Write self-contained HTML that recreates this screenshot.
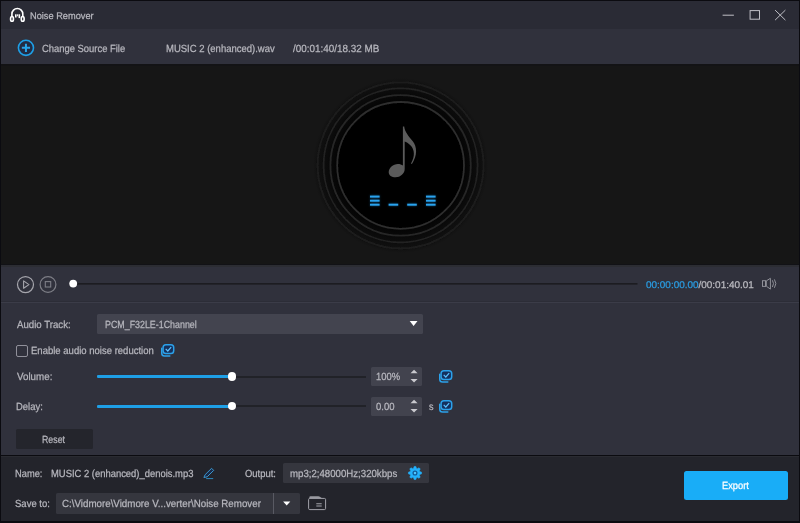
<!DOCTYPE html>
<html>
<head>
<meta charset="utf-8">
<title>Noise Remover</title>
<style>
*{margin:0;padding:0;box-sizing:border-box;}
html,body{width:800px;height:523px;overflow:hidden;background:#0b0b10;}
body{font-family:"Liberation Sans",sans-serif;color:#c9c9ce;position:relative;}
.abs{position:absolute;}
.t{position:absolute;text-rendering:geometricPrecision;white-space:nowrap;line-height:1;transform-origin:0 0;font-size:10.2px;color:#b7b7be;-webkit-text-stroke:0.25px currentColor;}
#titlebar{left:1px;top:1px;width:797.5px;height:28px;background:#2a2b35;}
#toolbar{left:1px;top:29px;width:797.5px;height:35px;background:#30313c;}
#gap{left:1px;top:64px;width:797.5px;height:2px;background:#131315;}
#stage{left:1px;top:66px;width:797.5px;height:198px;background:#161616;}
#gap2{left:1px;top:264px;width:797.5px;height:1.5px;background:#121216;}
#gap3{left:1px;top:265.4px;width:797.5px;height:2.1px;background:#2c2d33;}
#ctrl{left:1px;top:265.5px;width:797.5px;height:36px;background:#30313c;}
#sep0{left:1px;top:301px;width:797.5px;height:1px;background:#2c2d37;}
#sep1{left:1px;top:302px;width:797.5px;height:1px;background:#3b3c48;}
#panel{left:1px;top:303px;width:797.5px;height:151.5px;background:#30313c;}
#bottom{left:1px;top:455.7px;width:797.5px;height:65.8px;background:#23242b;border-top:1px solid #2a2b31;}
.box{position:absolute;background:#42434e;border-radius:1.5px;}
/*SCALES*/
#tx_title{font-size:9.6px;left:29.66px !important;top:12.00px !important;transform:scaleX(0.9625);}
#tx_change{font-size:10.4px;left:42.42px !important;top:45.00px !important;transform:scaleX(0.9053);}
#tx_file{font-size:10.4px;left:165.82px !important;top:45.00px !important;transform:scaleX(0.9141);}
#tx_dur{font-size:10.4px;left:292.60px !important;top:45.00px !important;transform:scaleX(0.9507);}
#tx_t1{font-size:9.7px;left:646.24px !important;top:281.00px !important;transform:scaleX(1.0262);}
#tx_at{font-size:10.4px;left:16.63px !important;top:321.00px !important;transform:scaleX(0.9291);}
#tx_pcm{font-size:10.4px;left:104.70px !important;top:321.00px !important;transform:scaleX(0.8538);}
#tx_en{font-size:10.4px;left:31.43px !important;top:347.00px !important;transform:scaleX(0.9165);}
#tx_vol{font-size:10.4px;left:16.57px !important;top:373.00px !important;transform:scaleX(0.9416);}
#tx_100{font-size:10.4px;left:375.57px !important;top:373.00px !important;transform:scaleX(0.9047);}
#tx_del{font-size:10.4px;left:15.94px !important;top:403.00px !important;transform:scaleX(0.9101);}
#tx_000{font-size:10.4px;left:375.51px !important;top:403.00px !important;transform:scaleX(0.9161);}
#tx_s{font-size:10.4px;left:428.74px !important;top:403.00px !important;transform:scaleX(0.8776);}
#tx_reset{font-size:10.4px;left:42.21px !important;top:436.00px !important;transform:scaleX(0.8480);}
#tx_name{font-size:10.4px;left:15.46px !important;top:470.00px !important;transform:scaleX(0.8946);}
#tx_fname{font-size:10.4px;left:50.56px !important;top:470.00px !important;transform:scaleX(0.9065);}
#tx_out{font-size:10.4px;left:245.33px !important;top:470.00px !important;transform:scaleX(0.9071);}
#tx_fmt{font-size:10.4px;left:290.23px !important;top:470.00px !important;transform:scaleX(0.9283);}
#tx_save{font-size:10.4px;left:15.39px !important;top:500.00px !important;transform:scaleX(0.9154);}
#tx_path{font-size:10.4px;left:61.76px !important;top:500.00px !important;transform:scaleX(0.9394);}
#tx_exp{font-size:10.4px;left:722.33px !important;top:482.00px !important;transform:scaleX(0.8942);}
/*ENDSCALES*/
</style>
</head>
<body>
<div class="abs" id="titlebar"></div>
<div class="abs" id="toolbar"></div>
<div class="abs" id="gap"></div>
<div class="abs" id="stage"></div>
<div class="abs" id="ctrl"></div>
<div class="abs" id="gap2"></div>
<div class="abs" id="gap3"></div>
<div class="abs" id="sep0"></div>
<div class="abs" id="sep1"></div>
<div class="abs" id="panel"></div>
<div class="abs" id="bottom"></div>

<!-- TITLE BAR -->
<svg class="abs" style="left:8px;top:6px" width="20" height="18" viewBox="8 6 20 18">
  <path d="M11.9 16.6 V13.95 A5.45 5.45 0 0 1 22.8 13.95 V16.6" fill="none" stroke="#fff" stroke-width="1.6"/>
  <ellipse cx="12" cy="18.9" rx="1.45" ry="2.4" fill="#2a2b35" stroke="#fff" stroke-width="1.6"/>
  <ellipse cx="22.7" cy="18.9" rx="1.45" ry="2.4" fill="#2a2b35" stroke="#fff" stroke-width="1.6"/>
  <rect x="15" y="14.3" width="1.6" height="3.2" fill="#fff"/>
  <rect x="17.05" y="14.3" width="1.1" height="2" fill="#f0f0f0"/>
  <rect x="18.55" y="14.3" width="1.6" height="3.8" fill="#fff"/>
</svg>
<div class="t" id="tx_title" style="left:29.8px;top:10.2px;">Noise Remover</div>
<svg class="abs" style="left:715px;top:4px" width="80" height="22" viewBox="715 4 80 22">
  <line x1="722.6" y1="15.2" x2="733.9" y2="15.2" stroke="#bfbfc6" stroke-width="1"/>
  <rect x="750.1" y="10.6" width="9.4" height="8.6" fill="none" stroke="#bfbfc6" stroke-width="1"/>
  <path d="M775.1 10.1 L785.4 20.1 M785.4 10.1 L775.1 20.1" stroke="#bfbfc6" stroke-width="1" fill="none"/>
</svg>

<!-- TOOLBAR -->
<svg class="abs" style="left:16px;top:38px" width="21" height="21" viewBox="16 38 21 21">
  <circle cx="25.95" cy="47.85" r="7.55" fill="#222b42" stroke="#1e9fe6" stroke-width="1.6"/>
  <path d="M21.85 47.85 H30.05 M25.95 43.75 V51.95" stroke="#27a5ea" stroke-width="2" fill="none"/>
</svg>
<div class="t" id="tx_change" style="left:42.9px;top:43.6px;">Change Source File</div>
<div class="t" id="tx_file" style="left:166.5px;top:43.6px;">MUSIC 2 (enhanced).wav</div>
<div class="t" id="tx_dur" style="left:292.5px;top:43.6px;">/00:01:40/18.32 MB</div>

<!-- STAGE -->
<svg class="abs" style="left:300px;top:66px" width="200" height="199" viewBox="300 66 200 199">
  <defs>
    <radialGradient id="halo" cx="400.6" cy="165.4" r="87.5" gradientUnits="userSpaceOnUse">
      <stop offset="0.72" stop-color="#040404"/>
      <stop offset="0.94" stop-color="#101010"/>
      <stop offset="1" stop-color="#161616"/>
    </radialGradient>
    <filter id="soft" x="-5%" y="-5%" width="110%" height="110%"><feGaussianBlur stdDeviation="0.6"/></filter>
    <filter id="glow" x="-50%" y="-200%" width="200%" height="500%"><feGaussianBlur stdDeviation="0.8"/></filter>
  </defs>
  <circle cx="400.6" cy="165.4" r="87.5" fill="url(#halo)"/>
  <g filter="url(#soft)">
  <circle cx="400.6" cy="165.4" r="83" fill="none" stroke="#1d1d1d" stroke-width="1.8"/>
  <circle cx="400.6" cy="165.4" r="77" fill="none" stroke="#212121" stroke-width="1.8"/>
  <circle cx="400.6" cy="165.4" r="70.2" fill="none" stroke="#262626" stroke-width="1.8"/>
  <circle cx="400.6" cy="165.4" r="63.4" fill="#000" stroke="#2d2d2d" stroke-width="1.8"/>
  </g>
  <!-- note -->
  <path d="M402.9 126.6 L404.2 126.6 C404.6 131.5 408.6 136.5 412.6 141 C417.2 146.5 417.6 155.5 411.9 164 L411 163.6 C415.2 156.3 414.6 149.5 410.6 145.6 C408.4 143.4 406.2 142 404.7 141.6 L404.7 169 C404.7 173.5 400.4 177.3 395.6 177.3 C391.6 177.3 388.7 175.3 388.7 172.2 C388.7 168 393.1 163.9 397.9 163.9 C399.9 163.9 401.7 164.5 402.9 165.5 Z" fill="#5b5b5b"/>
  <!-- eq bars -->
  <g fill="#1b8fdb" filter="url(#glow)" opacity="0.55">
    <rect x="370" y="195.6" width="9.6" height="2"/><rect x="370" y="199.7" width="9.6" height="2"/><rect x="370" y="203.7" width="9.6" height="2"/>
    <rect x="388.6" y="203.7" width="9.6" height="2"/>
    <rect x="407.2" y="203.7" width="9.6" height="2"/>
    <rect x="426" y="195.6" width="9.6" height="2"/><rect x="426" y="199.7" width="9.6" height="2"/><rect x="426" y="203.7" width="9.6" height="2"/>
  </g>
  <g fill="#2aa3ee">
    <rect x="370" y="195.6" width="9.6" height="2"/><rect x="370" y="199.7" width="9.6" height="2"/><rect x="370" y="203.7" width="9.6" height="2"/>
    <rect x="388.6" y="203.7" width="9.6" height="2"/>
    <rect x="407.2" y="203.7" width="9.6" height="2"/>
    <rect x="426" y="195.6" width="9.6" height="2"/><rect x="426" y="199.7" width="9.6" height="2"/><rect x="426" y="203.7" width="9.6" height="2"/>
  </g>
</svg>

<!-- CONTROL BAR -->
<svg class="abs" style="left:10px;top:270px" width="640" height="30" viewBox="10 270 640 30">
  <circle cx="25.5" cy="284.6" r="8" fill="none" stroke="#a6a6ad" stroke-width="1.2"/>
  <path d="M23.6 280.9 L28.9 284.6 L23.6 288.3 Z" fill="none" stroke="#a6a6ad" stroke-width="1.1" stroke-linejoin="round"/>
  <circle cx="48" cy="284.5" r="7.9" fill="none" stroke="#7d7e86" stroke-width="1.2"/>
  <rect x="45.3" y="281.6" width="5.4" height="5.4" fill="none" stroke="#7d7e86" stroke-width="1.1"/>
  <rect x="73" y="283" width="564.5" height="1.6" fill="#1c1c21"/>
  <circle cx="73.2" cy="283.6" r="3.9" fill="#fff"/>
</svg>
<div class="t" id="tx_t1" style="left:646.2px;top:280.2px;color:#b9b9bf;font-size:9.7px;"><span style="color:#2a9be0">00:00:00.00</span>/00:01:40.01</div>
<svg class="abs" style="left:758px;top:275px" width="22" height="18" viewBox="758 275 22 18">
  <rect x="762.5" y="280.7" width="3" height="5.7" fill="none" stroke="#8f9098" stroke-width="1"/>
  <path d="M766.3 280.9 L770.4 278.3 V289.1 L766.3 286.2 Z" fill="none" stroke="#8f9098" stroke-width="1" stroke-linejoin="round"/>
  <path d="M772.4 280.3 Q774.6 283.6 772.4 287" fill="none" stroke="#8f9098" stroke-width="1"/>
  <path d="M774.4 279.4 Q777.3 283.6 774.4 287.8" fill="none" stroke="#8f9098" stroke-width="1"/>
</svg>

<!-- PANEL -->
<div class="t" id="tx_at" style="left:15.5px;top:319.6px;">Audio Track:</div>
<div class="box" style="left:97px;top:314.3px;width:325.8px;height:19.4px;background:#43444f;"></div>
<div class="t" id="tx_pcm" style="left:104.5px;top:319.6px;">PCM_F32LE-1Channel</div>
<svg class="abs" style="left:408px;top:319px" width="12" height="9" viewBox="408 319 12 9"><path d="M409.7 321.1 H417.5 L413.6 325.9 Z" fill="#fff"/></svg>

<div class="abs" style="left:15.6px;top:344.5px;width:12.4px;height:12.1px;border:1px solid #90909a;border-radius:2px;"></div>
<div class="t" id="tx_en" style="left:31.8px;top:345.8px;">Enable audio noise reduction</div>
<svg class="abs ic" style="left:161.45px;top:344.4px" width="15" height="14" viewBox="0 0 15 14">
  <rect x="2.1" y="0.75" width="10.6" height="8.7" rx="2.8" fill="#15305c" stroke="#2ba1ea" stroke-width="1.5"/>
  <path d="M4.7 4.9 L6.8 7 L10.2 3.1" fill="none" stroke="#5cc0ff" stroke-width="1.2"/>
  <path d="M0.75 4.2 V9.2 A2.8 2.8 0 0 0 3.55 12 H8.8" fill="none" stroke="#2ba1ea" stroke-width="1.5" stroke-linecap="round"/>
</svg>

<div class="t" id="tx_vol" style="left:15.5px;top:372.1px;">Volume:</div>
<div class="abs" style="left:97px;top:375.7px;width:269px;height:2px;background:#212228;"></div>
<div class="abs" style="left:97px;top:375.4px;width:134px;height:2.5px;background:#1e9fe6;border-radius:1px;"></div>
<div class="abs" style="left:227.7px;top:372.2px;width:8.4px;height:8.4px;border-radius:50%;background:#fff;"></div>
<div class="box" style="left:371.1px;top:367px;width:51px;height:18.6px;"></div>
<div class="t" id="tx_100" style="left:376px;top:372.1px;">100%</div>
<svg class="abs" style="left:409px;top:368px" width="11" height="17" viewBox="409 368 11 17"><path d="M410.5 373.3 L414.05 369.8 L417.6 373.3 Z M410.5 379.1 L414.05 382.6 L417.6 379.1 Z" fill="#c9c9ce"/></svg>
<svg class="abs ic" style="left:439.15px;top:369.9px" width="15" height="14" viewBox="0 0 15 14">
  <rect x="2.1" y="0.75" width="10.6" height="8.7" rx="2.8" fill="#15305c" stroke="#2ba1ea" stroke-width="1.5"/>
  <path d="M4.7 4.9 L6.8 7 L10.2 3.1" fill="none" stroke="#5cc0ff" stroke-width="1.2"/>
  <path d="M0.75 4.2 V9.2 A2.8 2.8 0 0 0 3.55 12 H8.8" fill="none" stroke="#2ba1ea" stroke-width="1.5" stroke-linecap="round"/>
</svg>

<div class="t" id="tx_del" style="left:15.5px;top:401.8px;">Delay:</div>
<div class="abs" style="left:97px;top:405.4px;width:269px;height:2.1px;background:#212228;"></div>
<div class="abs" style="left:97px;top:405.1px;width:134px;height:2.6px;background:#1e9fe6;border-radius:1px;"></div>
<div class="abs" style="left:227.7px;top:401.9px;width:8.4px;height:8.4px;border-radius:50%;background:#fff;"></div>
<div class="box" style="left:371.1px;top:397px;width:51px;height:18.9px;"></div>
<div class="t" id="tx_000" style="left:375.9px;top:402px;">0.00</div>
<svg class="abs" style="left:409px;top:398px" width="11" height="17" viewBox="409 368 11 17"><path d="M410.5 373.3 L414.05 369.8 L417.6 373.3 Z M410.5 379.1 L414.05 382.6 L417.6 379.1 Z" fill="#c9c9ce"/></svg>
<div class="t" id="tx_s" style="left:429.6px;top:402px;">s</div>
<svg class="abs ic" style="left:439.15px;top:399.9px" width="15" height="14" viewBox="0 0 15 14">
  <rect x="2.1" y="0.75" width="10.6" height="8.7" rx="2.8" fill="#15305c" stroke="#2ba1ea" stroke-width="1.5"/>
  <path d="M4.7 4.9 L6.8 7 L10.2 3.1" fill="none" stroke="#5cc0ff" stroke-width="1.2"/>
  <path d="M0.75 4.2 V9.2 A2.8 2.8 0 0 0 3.55 12 H8.8" fill="none" stroke="#2ba1ea" stroke-width="1.5" stroke-linecap="round"/>
</svg>

<div class="box" style="left:16px;top:429.4px;width:77px;height:19.2px;background:#24252c;"></div>
<div class="t" id="tx_reset" style="left:42px;top:434.2px;">Reset</div>

<!-- BOTTOM -->
<div class="t" id="tx_name" style="left:15.6px;top:468.6px;">Name:</div>
<div class="t" id="tx_fname" style="left:50.4px;top:468.6px;">MUSIC 2 (enhanced)_denois.mp3</div>
<svg class="abs" style="left:201px;top:465px" width="16" height="16" viewBox="201 465 16 16">
  <path d="M205.1 474.7 L211.6 468.3 L213.7 470.4 L207.2 476.8 L203.9 477.5 Z" fill="#1a2a48" stroke="#3a98d2" stroke-width="1" stroke-linejoin="round"/>
  <path d="M206.2 478.6 H213.2" stroke="#2f88bc" stroke-width="1"/>
</svg>
<div class="t" id="tx_out" style="left:245px;top:468.6px;">Output:</div>
<div class="box" style="left:283.4px;top:462.6px;width:145.5px;height:20.4px;background:#35363e;"></div>
<div class="t" id="tx_fmt" style="left:290.9px;top:468.6px;">mp3;2;48000Hz;320kbps</div>
<svg class="abs" style="left:405.9px;top:464.05px" width="18" height="18" viewBox="-9 -9 18 18">
  <path d="M-1.43 -4.69 L-0.80 -6.55 L0.80 -6.55 L1.43 -4.69 L2.30 -4.33 L4.06 -5.20 L5.20 -4.06 L4.33 -2.30 L4.69 -1.43 L6.55 -0.80 L6.55 0.80 L4.69 1.43 L4.33 2.30 L5.20 4.06 L4.06 5.20 L2.30 4.33 L1.43 4.69 L0.80 6.55 L-0.80 6.55 L-1.43 4.69 L-2.30 4.33 L-4.06 5.20 L-5.20 4.06 L-4.33 2.30 L-4.69 1.43 L-6.55 0.80 L-6.55 -0.80 L-4.69 -1.43 L-4.33 -2.30 L-5.20 -4.06 L-4.06 -5.20 L-2.30 -4.33 Z" fill="#22b0fb" stroke="#22b0fb" stroke-width="0.6" stroke-linejoin="round"/>
  <circle r="1.9" fill="#4fc6ff" stroke="#125a96" stroke-width="1.3"/>
</svg>

<div class="t" id="tx_save" style="left:15px;top:499px;">Save to:</div>
<div class="box" style="left:56.1px;top:492.9px;width:243.8px;height:20.7px;background:#35363e;"></div>
<div class="abs" style="left:273px;top:492.9px;width:1px;height:20.7px;background:#595a63;"></div>
<div class="t" id="tx_path" style="left:61.5px;top:499px;">C:\Vidmore\Vidmore V...verter\Noise Remover</div>
<svg class="abs" style="left:281px;top:499px" width="12" height="9" viewBox="408 319 12 9"><path d="M410.1 321.4 H417.3 L413.7 325.6 Z" fill="#fff"/></svg>
<svg class="abs" style="left:306px;top:494px" width="22" height="18" viewBox="306 494 22 18">
  <path d="M308.6 499.6 Q308.6 498.4 309.8 498.4 H324.4 Q325.6 498.4 325.6 499.6 V508.4 Q325.6 509.6 324.4 509.6 H309.8 Q308.6 509.6 308.6 508.4 Z" fill="none" stroke="#a2a2a9" stroke-width="1"/>
  <path d="M309.3 498.6 V497.5 Q309.3 496.3 310.5 496.3 H318.4 Q319.2 496.3 319.9 496.8 L322.3 498.6 Z" fill="#9a9aa1"/>
  <path d="M316.3 503.7 H321.7 M316.3 506 H321.7" stroke="#a2a2a9" stroke-width="1.1"/>
</svg>

<div class="abs" style="left:684px;top:471px;width:104.2px;height:28.8px;background:#19adf7;border-radius:2.5px;"></div>
<div class="t" id="tx_exp" style="left:722.5px;top:481px;color:#fff;">Export</div>
</body>
</html>
